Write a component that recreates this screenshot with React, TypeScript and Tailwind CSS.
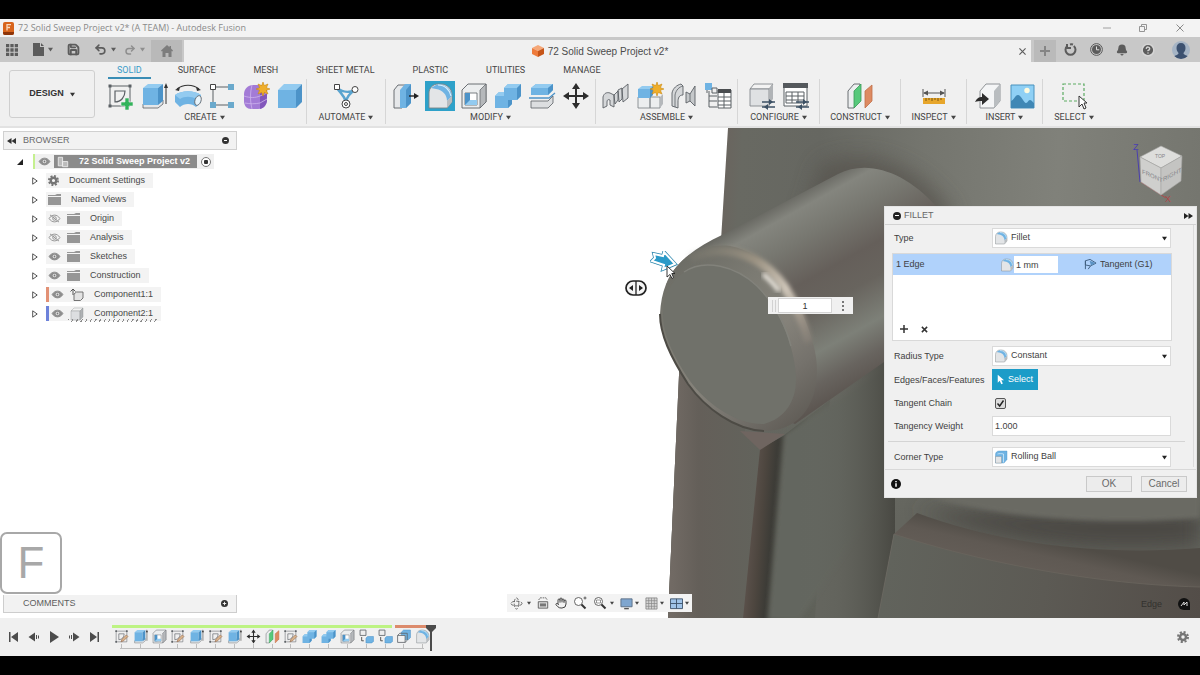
import { ReactNode, useState } from 'react'
import { Bell, CircleHelp, Hand, Save, Undo2, Redo2 } from 'lucide-react'
import clsx from 'clsx'

type IconProps = { className?: string }

const LINE = '#5b6065'
const BLUE = '#6fb3e3'
const BLUE_DARK = '#4c93c8'
const BLUE_LIGHT = '#93cbf0'

function Svg({ className = 'size-7', children }: IconProps & { children: ReactNode }) {
  return (
    <svg viewBox="0 0 28 28" className={clsx('shrink-0', className)} fill="none" aria-hidden="true">
      {children}
    </svg>
  )
}

function Caret({ className = 'size-[5px]' }: IconProps) {
  return (
    <svg viewBox="0 0 6 6" className={clsx('shrink-0', className)} fill="currentColor" aria-hidden="true">
      <path d="M0 1h6L3 5.5z" />
    </svg>
  )
}

function Gear({ className }: IconProps) {
  return (
    <svg viewBox="0 0 24 24" className={clsx('shrink-0', className)} fill="none" stroke="#757575" aria-hidden="true">
      <circle cx="12" cy="12" r="6" strokeWidth="5" />
      <circle cx="12" cy="12" r="10" strokeWidth="4" strokeDasharray="4.200 3.654" />
    </svg>
  )
}

/* ---------- tool icons ---------- */

function SketchIcon({ className, pencil }: IconProps & { pencil?: boolean }) {
  return (
    <Svg className={className}>
      <path d="M4 4h20v20H4z" stroke={LINE} strokeWidth="1" />
      <path d="M2.5 2.5h3v3h-3zM22.5 2.5h3v3h-3zM2.5 22.5h3v3h-3z" fill={LINE} />
      <path d="M9 20V9h10c0 6-4 11-10 11z" stroke={LINE} strokeWidth="1.2" />
      {pencil ? (
        <path d="M13 24l2-5 8-8 3 3-8 8z" fill="#d9b48c" stroke="#8a5a3c" />
      ) : (
        <path d="M19 16h4v4h4v4h-4v4h-4v-4h-4v-4h4z" fill="#32b35a" stroke="#f0f0f0" strokeWidth=".6" />
      )}
    </Svg>
  )
}

function ExtrudeIcon({ className }: IconProps) {
  return (
    <Svg className={className}>
      <path d="M3 22v4h15l5-4v-4z" fill="#e4e6e8" stroke={LINE} strokeWidth=".8" />
      <path d="M3 6l5-4h15l-5 4z" fill={BLUE_LIGHT} />
      <path d="M3 6h15v17H3z" fill={BLUE} />
      <path d="M18 6l5-4v17l-5 4z" fill={BLUE_DARK} />
      <path d="M26 22V5" stroke="#333" />
      <path d="M26 1l2 5h-4z" fill="#333" />
    </Svg>
  )
}

function RevolveIcon() {
  return (
    <Svg>
      <path d="M3 7c6-5 16-5 22 0" stroke="#333" strokeWidth="1.2" />
      <path d="M1 8l5-3-1 4zM27 8l-5-3 1 4z" fill="#333" />
      <path d="M1 13c7-5 19-5 26 0v7l-5 5c-4-4-12-4-16 0l-5-5z" fill={BLUE} />
      <path d="M1 13c7-5 19-5 26 0l-5 4c-4-3-12-3-16 0z" fill={BLUE_LIGHT} />
      <ellipse cx="24" cy="18.500" rx="3" ry="5" fill="#e8f4fb" stroke={LINE} strokeWidth=".8" transform="rotate(20 24 18.500)" />
    </Svg>
  )
}

function PatternIcon() {
  return (
    <Svg>
      <path d="M5 5h18M5 5v18h18" stroke={LINE} />
      <path d="M2.5 2.5h5v5h-5z" fill="#fff" stroke="#444" />
      <path d="M20 2h6v6h-6zM2 20h6v6H2zM20 20h6v6h-6z" fill="#6aa9cc" />
    </Svg>
  )
}

function Spark({ x, y }: { x: number; y: number }) {
  return (
    <g transform={`translate(${x} ${y})`}>
      <path
        d="M0-7l1.3 3.6L5-5 3.4-1.300 7 0 3.400 1.300 5 5 1.300 3.400 0 7-1.300 3.400-5 5-3.400 1.300-7 0-3.400-1.300-5-5-1.300-3.400z"
        fill="#efae2a"
        stroke="#c98a14"
        strokeWidth=".6"
      />
    </g>
  )
}

function FormIcon() {
  return (
    <Svg>
      <path d="M2 12c0-5 4-9 9-9h7c4 0 7 3 7 7v7c0 6-3 10-9 10H9c-4 0-7-3-7-8z" fill="#a37bd6" />
      <path d="M18 11l7-4v11c0 4-3 8-7 9z" fill="#8257bb" />
      <path d="M2 14c6 2 11 2 16 0l7-3M10 3c-2 8-2 16 0 24M3 21c5 1 10 1 15 0l7-4" stroke="#cdb4ee" strokeWidth=".8" />
      <Spark x={21} y={7} />
    </Svg>
  )
}

function CubeIcon({ className, blue = true }: IconProps & { blue?: boolean }) {
  return (
    <Svg className={className}>
      <path d="M2 8l6-6h18l-6 6z" fill={blue ? BLUE_LIGHT : '#f3f3f3'} stroke={blue ? 'none' : '#8b8e91'} strokeWidth=".8" />
      <path d="M2 8h18v18H2z" fill={blue ? BLUE : '#dcdee0'} stroke={blue ? 'none' : '#8b8e91'} strokeWidth=".8" />
      <path d="M20 8l6-6v18l-6 6z" fill={blue ? BLUE_DARK : '#aeb1b4'} stroke={blue ? 'none' : '#8b8e91'} strokeWidth=".8" />
    </Svg>
  )
}

function AutomateIcon() {
  return (
    <Svg>
      <path d="M5 6c4 6 7 7 9 14M23 8c-5 3-8 6-9 12M5 6c5 4 12 5 18 2" stroke="#5aa4cf" strokeWidth="2.500" />
      <path d="M2.500 2.500h5v5h-5z" fill="#fff" stroke="#444" />
      <circle cx="23" cy="7.500" r="3" fill="#fff" stroke="#444" />
      <circle cx="14" cy="22" r="4" fill="#fff" stroke="#444" />
      <circle cx="14" cy="22" r="1.500" stroke="#444" />
    </Svg>
  )
}

function PressPullIcon() {
  return (
    <Svg>
      <path d="M2 8l4-5h8v18l-4 5H2z" fill="#e6e8ea" stroke={LINE} strokeWidth=".9" />
      <path d="M8 8l5-6h6v19l-5 5H8z" fill={BLUE} />
      <path d="M14 8l5-6v19l-5 5z" fill={BLUE_DARK} />
      <path d="M17 14h6" stroke="#222" strokeWidth="1.400" />
      <path d="M27 14l-5-3v6z" fill="#222" />
    </Svg>
  )
}

function FilletIcon({ className }: IconProps) {
  return (
    <Svg className={className}>
      <path d="M3 11c0-5 4-9 9-9h3c6 0 11 5 11 11v7l-5 6H3z" fill="#e3e5e7" stroke="#7d8387" strokeWidth=".9" />
      <path d="M10 3c3-1 6-1 9 1 4 2 7 6 7 10l-5 5c0-6-4-11-11-12l-5-1z" fill={BLUE} />
      <path d="M12 3c7 0 12 5 13 11" stroke="#d8effc" strokeWidth="1.200" />
      <path d="M21 19l5-5v6l-5 6z" fill="#b9bdc0" />
    </Svg>
  )
}

function ShellIcon({ className }: IconProps) {
  return (
    <Svg className={className}>
      <path d="M2 8l6-6h18v18l-6 6H2z" fill="#eceeef" stroke={LINE} strokeWidth=".9" />
      <path d="M20 8l6-6v18l-6 6z" fill="#b5b8bb" stroke={LINE} strokeWidth=".7" />
      <path d="M5 11h12v12H5z" fill="#fff" stroke={LINE} strokeWidth=".8" />
      <path d="M5 11h5v12H5z" fill={BLUE_DARK} />
      <path d="M5 23l5-5h7v5z" fill={BLUE_LIGHT} />
    </Svg>
  )
}

function CombineIcon({ className }: IconProps) {
  return (
    <Svg className={className}>
      <path d="M10 6l4-4h13v12l-4 4h-5v4l-4 4H1V14l4-4h5z" fill={BLUE} />
      <path d="M10 6l4-4h13l-4 4zM1 14l4-4h5v4z" fill={BLUE_LIGHT} />
      <path d="M23 6l4-4v12l-4 4zM14 18h4v4l-4 4z" fill={BLUE_DARK} />
    </Svg>
  )
}

function SplitIcon() {
  return (
    <Svg>
      <path d="M3 6l5-4h17v6l-5 5H3z" fill={BLUE} />
      <path d="M3 6l5-4h17l-5 4z" fill={BLUE_LIGHT} />
      <path d="M20 6l5-4v6l-5 5z" fill={BLUE_DARK} />
      <path d="M3 19h17l5-5v7l-5 5H3z" fill="#dcdee0" stroke={LINE} strokeWidth=".8" />
      <path d="M1 16h20l6-5" stroke={BLUE_DARK} strokeWidth="1.300" />
    </Svg>
  )
}

function MoveIcon({ className }: IconProps) {
  return (
    <Svg className={className}>
      <path d="M14 4v20M4 14h20" stroke="#2d2d2d" strokeWidth="2" />
      <path d="M14 1l4 6h-8zM14 27l4-6h-8zM1 14l6-4v8zM27 14l-6-4v8z" fill="#2d2d2d" />
    </Svg>
  )
}

function InsertComponentIcon() {
  return (
    <Svg>
      <path
        d="M1 26V15c1-4 4-5 7-4l4 2v12l-4-2V18c-2-1-3 0-3 2v4zM12 13l4-4v9l-3 4zM16 8l4-2v11l-3 3zM20 7l6-5v14l-5 4z"
        fill="#d5d7d9"
        stroke={LINE}
        strokeWidth=".9"
      />
    </Svg>
  )
}

function NewComponentIcon() {
  return (
    <Svg>
      <path d="M2 15h12v11H2zM14 15h10v11H14z" fill="#eceeef" stroke="#85898c" strokeWidth=".9" />
      <path d="M24 15l3-3v10l-3 4z" fill="#b5b8bb" />
      <path d="M2 7l4-3h11l-3 3z" fill={BLUE_LIGHT} />
      <path d="M2 7h12v9H2z" fill={BLUE} />
      <path d="M14 7l3-3v9l-3 3z" fill={BLUE_DARK} />
      <Spark x={21} y={7} />
    </Svg>
  )
}

function JointIcon() {
  return (
    <Svg>
      <path d="M2 24V11c1-5 5-8 9-9l2 2v9c-4 0-5 3-5 7v6z" fill="#d5d7d9" stroke={LINE} strokeWidth=".9" />
      <path d="M5 25V13c1-5 4-8 8-9" stroke={LINE} strokeWidth=".8" />
      <path d="M16 10l4 2 5-8v20l-5-5-4 2z" fill="#c5c8ca" stroke={LINE} strokeWidth=".9" />
      <path d="M20 12v7" stroke={LINE} strokeWidth=".8" />
    </Svg>
  )
}

function BomIcon() {
  return (
    <Svg>
      <path d="M1 1h7v7H1z" fill={BLUE} />
      <path d="M8 6h5v5H8zM3 8v3" stroke={LINE} />
      <path d="M5 14h8M5 19h8M5 25h8M5 9v16" stroke={LINE} />
      <path d="M14 8h13v18H14z" fill="#fff" stroke={LINE} />
      <path d="M14 7h13v4H14z" fill="#4a4d50" />
      <path d="M14 15h13M14 19h13M14 23h13M20 11v15" stroke={LINE} />
    </Svg>
  )
}

function Sliders() {
  return (
    <>
      <path d="M14 20h13M14 25h13" stroke="#3c5064" strokeWidth="1.500" />
      <path d="M21 17l4 3-4 3zM20 22l-4 3 4 3z" fill="#3c5064" />
    </>
  )
}

function ConfigureIcon() {
  return (
    <Svg>
      <path d="M2 7l4-5h19l-4 5z" fill="#f3f3f3" stroke="#85898c" strokeWidth=".9" />
      <path d="M2 7h19v17H2z" fill="#dfe1e3" stroke="#85898c" strokeWidth=".9" />
      <path d="M21 7l4-5v15l-4 5z" fill="#b0b3b6" />
      <Sliders />
    </Svg>
  )
}

function ConfigTableIcon() {
  return (
    <Svg>
      <path d="M2 2h23v22H2z" fill="#fff" stroke={LINE} />
      <path d="M1 1h25v5H1z" fill="#55595d" />
      <path d="M4 10h18v11H4zM4 14h18M4 18h18M10 10v11M16 10v11" stroke={LINE} />
      <Sliders />
    </Svg>
  )
}

function PlaneIcon({ className }: IconProps) {
  return (
    <Svg className={className}>
      <path d="M2 9l6-7h6v16l-6 8H2z" fill="#eceeef" stroke={LINE} strokeWidth=".9" />
      <path d="M8 9l7-7v17l-7 7z" fill="#57c97b" stroke="#3b9b59" strokeWidth=".8" />
      <path d="M19 9l7-6v16l-7 7z" fill="#dd8a61" stroke="#c0704a" strokeWidth=".8" />
    </Svg>
  )
}

function MeasureIcon() {
  return (
    <Svg>
      <path d="M3 7v8M25 7v8M4 11h20" stroke="#555" />
      <path d="M3 11l5-2.500v5zM25 11l-5-2.500v5z" fill="#555" />
      <path d="M3 16h22v6H3z" fill="#e7a62b" />
      <path d="M6 16v3M9 16v2M12 16v3M15 16v2M18 16v3M21 16v2" stroke="#7b5611" />
    </Svg>
  )
}

function InsertIcon() {
  return (
    <Svg>
      <path d="M6 9l6-7h14v17l-6 7H6z" fill="#f4f5f6" stroke="#85898c" strokeWidth=".9" />
      <path d="M20 9l6-7v17l-6 7z" fill="#b9bdc0" />
      <path d="M1 20c2-4 4-5 7-5v-4l7 6-7 6v-4c-3 0-5 0-7 1z" fill="#2d2d2d" />
    </Svg>
  )
}

function DecalIcon() {
  return (
    <Svg>
      <path d="M3 3h23v23H3z" fill="#8fd0f5" stroke="#4b92bd" />
      <path d="M3 19c3-1 4-6 7-6s6 8 8 8 2-3 4-3 3 3 4 3v5H3z" fill="#3f87b5" />
      <circle cx="19" cy="8.500" r="2.700" fill="#fffbe0" />
    </Svg>
  )
}

function SelectIcon() {
  return (
    <Svg>
      <path d="M3 2h21v17H3z" stroke="#5cab62" strokeWidth="1.200" strokeDasharray="3 2" />
      <path d="M19 14v11l3-3 2 5 2-1-2-5h3z" fill="#fff" stroke="#333" />
    </Svg>
  )
}

function RigidIcon({ className }: IconProps) {
  return (
    <Svg className={className}>
      <path d="M2 2h11v10H2z" fill="#eee" stroke={LINE} strokeWidth="1.500" />
      <path d="M5 15v7h4" stroke="#333" strokeWidth="1.500" />
      <path d="M13 17l3-3h11v9l-3 3H13z" fill={BLUE} stroke={BLUE_DARK} />
    </Svg>
  )
}

function CopyBodyIcon({ className }: IconProps) {
  return (
    <Svg className={className}>
      <path d="M10 6l4-4h13v14l-4 4H10z" fill={BLUE} stroke={BLUE_DARK} />
      <path d="M3 12h14v13H3z" fill="#f3f3f3" stroke={LINE} strokeWidth="1.500" />
      <path d="M3 12l4-4h14v13l-4 4" stroke={LINE} strokeWidth="1.500" />
    </Svg>
  )
}

function RollingBallIcon({ className }: IconProps) {
  return (
    <Svg className={className}>
      <path d="M3 9c0-4 3-7 7-7h16v17l-6 7H3z" fill={BLUE} stroke={BLUE_DARK} strokeWidth=".8" />
      <path d="M3 13h12v13H3z" fill="#e3e5e7" stroke="#85898c" strokeWidth=".8" />
      <path d="M7 8c3-1 8-1 12 0v17" stroke="#d8effc" strokeWidth="1.500" />
    </Svg>
  )
}

/* ---------- top bars ---------- */

function TitleBar() {
  return (
    <header className="flex h-[18px] shrink-0 items-center bg-[#f3f3f3] pl-[3px] text-[#8a8a8a]">
      <svg viewBox="0 0 11 13" className="mr-1 h-[13px] w-[11px]" aria-hidden="true">
        <rect width="11" height="13" rx="2" fill="#d8641c" />
        <path d="M0 10h11v1a2 2 0 0 1-2 2H2a2 2 0 0 1-2-2z" fill="#8e3509" />
        <path d="M4 8.500V2.700h4M4 5.500h3" stroke="#fbd9bd" strokeWidth="1.300" fill="none" />
      </svg>
      <h1 className="font-['Open_Sans',sans-serif] text-[9px]">72 Solid Sweep Project v2* (A TEAM) - Autodesk Fusion</h1>
      <div className="ml-auto flex">
        <button aria-label="Minimize" className="flex h-[18px] w-9 items-center justify-center">
          <svg viewBox="0 0 8 8" className="size-2" stroke="currentColor" strokeWidth=".8">
            <path d="M0 4h8" />
          </svg>
        </button>
        <button aria-label="Restore" className="flex h-[18px] w-9 items-center justify-center">
          <svg viewBox="0 0 8 8" className="size-2" stroke="currentColor" fill="none" strokeWidth=".9">
            <path d="M.5 2.500h5v5h-5zM2.500 2V.5h5v5H6" />
          </svg>
        </button>
        <button aria-label="Close window" className="mr-px flex h-[18px] w-[38px] items-center justify-center">
          <svg viewBox="0 0 8 8" className="size-2" stroke="currentColor">
            <path d="M.5.5l7 7M7.500.5l-7 7" />
          </svg>
        </button>
      </div>
    </header>
  )
}

function QuickBar() {
  return (
    <div className="flex h-[25px] shrink-0 items-stretch bg-[#c8c8c8] text-[#5c5c5c]">
      <div className="flex w-[151px] items-center pl-1.5">
        <button aria-label="Data panel">
          <svg viewBox="0 0 11 11" className="size-[12px]" fill="currentColor">
            <path d="M0 0h3v3H0zM4 0h3v3H4zM8 0h3v3H8zM0 4h3v3H0zM4 4h3v3H4zM8 4h3v3H8zM0 8h3v3H0zM4 8h3v3H4zM8 8h3v3H8z" />
          </svg>
        </button>
        <button aria-label="File" className="ml-[15px] flex items-center gap-1">
          <svg viewBox="0 0 11 13" className="h-[13px] w-[11px]" fill="currentColor">
            <path d="M0 0h7v4h4v9H0z" />
            <path d="M8 0l3 3H8z" />
          </svg>
          <Caret />
        </button>
        <button aria-label="Save" className="ml-[14px]">
          <Save className="size-[13px]" strokeWidth={3.500} />
        </button>
        <button aria-label="Undo" className="ml-3.5 flex items-center gap-1">
          <Undo2 className="size-[13px]" strokeWidth={3} />
          <Caret />
        </button>
        <button aria-label="Redo" className="ml-2 flex items-center gap-1 text-[#8e8e8e]">
          <Redo2 className="size-[12px]" strokeWidth={3} />
          <Caret />
        </button>
      </div>
      <button aria-label="Home" className="mt-[3px] flex w-[31px] items-center justify-center bg-[#b9b9b9]">
        <svg viewBox="0 0 12 12" className="size-3" fill="#7d7d7d">
          <path d="M6 0l2.500 2.200V1H10v2.500l2 2L11.300 6.500 10.500 6v6H7.500V8h-3v4h-3V6l-.8.500L0 5.500z" />
        </svg>
      </button>
      <div className="mt-[3px] ml-0.5 flex flex-1 items-center bg-[#f0f0f0] pr-[3px]">
        <div className="flex flex-1 items-center justify-center gap-1 text-[10px] text-[#4c4c4c]">
          <svg viewBox="0 0 12 12" className="size-3" aria-hidden="true">
            <path d="M0 3l6-3 6 3-6 3z" fill="#f5a777" />
            <path d="M0 3l6 3v6L0 9z" fill="#ee7b3b" />
            <path d="M12 3L6 6v6l6-3z" fill="#c65518" />
          </svg>
          <span>72 Solid Sweep Project v2*</span>
        </div>
        <button aria-label="Close tab" className="flex size-3 items-center justify-center">
          <svg viewBox="0 0 8 8" className="size-[7px]" stroke="currentColor" strokeWidth="1.300">
            <path d="M.5.5l7 7M7.500.5l-7 7" />
          </svg>
        </button>
      </div>
      <button aria-label="New tab" className="mt-[3px] mr-2 ml-[3px] flex w-[22px] items-center justify-center bg-[#bababa]">
        <svg viewBox="0 0 10 10" className="size-2.5" fill="#858585">
          <path d="M4 0h2v4h4v2H6v4H4V6H0V4h4z" />
        </svg>
      </button>
      <div className="flex items-center gap-[13px] pr-2.5">
        <button aria-label="Extensions">
          <svg viewBox="0 0 13 13" className="size-[13px]" fill="none" stroke="currentColor" strokeWidth="2">
            <path d="M3.200 3A5 5 0 1 0 9.800 3" />
            <path d="M3 1v4h4" />
            <path d="M9 1.500A5 5 0 0 0 6 1.500" />
          </svg>
        </button>
        <button aria-label="Job status">
          <svg viewBox="0 0 13 13" className="size-[13px]">
            <circle cx="6.500" cy="6.500" r="5.900" fill="none" stroke="#5c5c5c" />
            <circle cx="6.500" cy="6.500" r="4.500" fill="#5c5c5c" />
            <path d="M6.500 3.500v3.300h2.700" stroke="#e0e0e0" fill="none" />
          </svg>
        </button>
        <button aria-label="Notifications">
          <Bell className="size-[12px]" fill="currentColor" strokeWidth={2.500} />
        </button>
        <button aria-label="Help">
          <CircleHelp className="size-[14px]" fill="#5c5c5c" stroke="#d5d5d5" strokeWidth={2.500} />
        </button>
        <button aria-label="Account" className="ml-1">
          <svg viewBox="0 0 18 18" className="size-[18px]">
            <circle cx="9" cy="9" r="9" fill="#a5b4c5" />
            <path d="M9 2c3 0 4.500 2 4.500 5S12 11 11.500 12c0 2 3 2 4 3.200A9 9 0 0 1 2.500 15.200c1-1.200 4-1.200 4-3.200C6 11 4.500 10 4.500 7S6 2 9 2z" fill="#3c5170" />
          </svg>
        </button>
      </div>
    </div>
  )
}

const WORKSPACE_TABS = ['SOLID', 'SURFACE', 'MESH', 'SHEET METAL', 'PLASTIC', 'UTILITIES', 'MANAGE']

const TOOL_GROUPS: { label: string; width: string; active?: number; icons: ReactNode[] }[] = [
  {
    label: 'CREATE',
    width: 'w-[204px]',
    icons: [<SketchIcon />, <ExtrudeIcon />, <RevolveIcon />, <PatternIcon />, <FormIcon />, <CubeIcon />]
  },
  { label: 'AUTOMATE', width: 'w-[79px]', icons: [<AutomateIcon />] },
  {
    label: 'MODIFY',
    width: 'w-[210px]',
    active: 1,
    icons: [<PressPullIcon />, <FilletIcon />, <ShellIcon />, <CombineIcon />, <SplitIcon />, <MoveIcon />]
  },
  {
    label: 'ASSEMBLE',
    width: 'w-[142px]',
    icons: [<InsertComponentIcon />, <NewComponentIcon />, <JointIcon />, <BomIcon />]
  },
  { label: 'CONFIGURE', width: 'w-[82px]', icons: [<ConfigureIcon />, <ConfigTableIcon />] },
  { label: 'CONSTRUCT', width: 'w-[81px]', icons: [<PlaneIcon />] },
  { label: 'INSPECT', width: 'w-[66px]', icons: [<MeasureIcon />] },
  { label: 'INSERT', width: 'w-[76px]', icons: [<InsertIcon />, <DecalIcon />] },
  { label: 'SELECT', width: 'w-[62px]', icons: [<SelectIcon />] }
]

function Ribbon() {
  const [tab, setTab] = useState('SOLID')
  return (
    <div className="flex h-[66px] shrink-0 border-b-2 border-[#e2e2e2] bg-[#f0f0f0] text-[#454545]">
      <button className="mt-2 mr-2 mb-2 ml-[9px] flex w-[86px] items-center justify-center gap-1.5 rounded-[3px] border border-[#cfcfcf] text-[9px] font-bold text-[#333]">
        DESIGN <Caret />
      </button>
      <div className="font-['Roboto',sans-serif]">
        <nav className="ml-[5px] flex h-[17px]">
          {WORKSPACE_TABS.map((name) => (
            <button
              key={name}
              onClick={() => setTab(name)}
              className={clsx(
                'border-b-2 pt-0.5 text-[9px] leading-[13px]',
                name === 'SOLID' ? 'mr-[27px] px-[9px]' : 'mr-[38px]',
                tab === name ? 'border-[#3a8db5] text-[#3a9cc9]' : 'border-transparent'
              )}
            >
              {name}
            </button>
          ))}
        </nav>
        <div className="flex">
          {TOOL_GROUPS.map((group) => (
            <div
              key={group.label}
              className={clsx('flex h-[45px] flex-col items-center border-r border-[#d6d6d6] last:border-r-0', group.width)}
            >
              <div className="flex">
                {group.icons.map((icon, i) => (
                  <button
                    key={i}
                    aria-label={`${group.label} tool ${i + 1}`}
                    className="flex h-[33px] w-[34px] items-center justify-center"
                  >
                    {i === group.active ? <span className="bg-[#2ea1c9] p-px">{icon}</span> : icon}
                  </button>
                ))}
              </div>
              <button className="flex items-center gap-[3px] text-[9px] leading-[11px] whitespace-nowrap">
                {group.label} <Caret />
              </button>
            </div>
          ))}
        </div>
      </div>
    </div>
  )
}

/* ---------- browser tree ---------- */

function Eye({ off }: { off?: boolean }) {
  return (
    <svg viewBox="0 0 14 10" className="h-[9px] w-[13px] shrink-0" fill="none" aria-hidden="true">
      <path d="M1 5c3-5 9-5 12 0-3 5-9 5-12 0z" fill={off ? 'none' : '#8d8d8d'} stroke="#8d8d8d" />
      <circle cx="7" cy="5" r="2" fill={off ? 'none' : '#e8e8e8'} stroke={off ? '#8d8d8d' : 'none'} />
      {!off && <circle cx="7" cy="5" r="1" fill="#777" />}
      {off && <path d="M2 1l10 8" stroke="#8d8d8d" />}
    </svg>
  )
}

function Folder() {
  return (
    <svg viewBox="0 0 13 11" className="h-[11px] w-[13px] shrink-0" fill="#969696" aria-hidden="true">
      <path d="M0 3h13v8H0zM0 1h7l2-1h4v2H0z" />
    </svg>
  )
}

type TreeItem = { name: string; eye?: 'on' | 'off'; icon: ReactNode; bar?: string; hatched?: boolean }

const TREE: TreeItem[] = [
  { name: 'Document Settings', icon: <Gear className="size-[11px]" /> },
  { name: 'Named Views', icon: <Folder /> },
  { name: 'Origin', eye: 'off', icon: <Folder /> },
  { name: 'Analysis', eye: 'off', icon: <Folder /> },
  { name: 'Sketches', eye: 'on', icon: <Folder /> },
  { name: 'Construction', eye: 'on', icon: <Folder /> },
  {
    name: 'Component1:1',
    eye: 'on',
    bar: 'bg-[#e29175]',
    icon: (
      <Svg className="size-[14px]">
        <path d="M8 12l5-4h13v12l-5 5H8z" fill="#e3e3e3" stroke="#666" strokeWidth="1.800" />
        <path d="M6 2v12M1 7l5-5 5 5" stroke="#555" strokeWidth="2" />
      </Svg>
    )
  },
  { name: 'Component2:1', eye: 'on', bar: 'bg-[#6d82da]', hatched: true, icon: <CubeIcon className="size-[14px]" blue={false} /> }
]

function BrowserPanel() {
  return (
    <section className="absolute top-[3px] left-[3px] w-[234px] text-[9px] text-[#484848]">
      <div className="flex h-[19px] items-center border border-[#d0d0d0] bg-[#f2f2f2] px-[3px]">
        <button aria-label="Collapse browser">
          <svg viewBox="0 0 9 6" className="h-[6px] w-[9px]" fill="#333">
            <path d="M4.500 0v6L0 3zM9 0v6L4.500 3z" />
          </svg>
        </button>
        <h2 className="ml-[7px] text-[#6b6b6b]">BROWSER</h2>
        <button aria-label="Browser options" className="mr-1 ml-auto flex size-[7px] items-center justify-center rounded-full bg-[#333]">
          <span className="h-px w-[3px] bg-white" />
        </button>
      </div>

      <ul className="mt-0.5">
        <li className="flex h-[19px] items-center">
          <button aria-label="Toggle project" className="ml-[14px] w-4">
            <svg viewBox="0 0 6 6" className="size-[6px]" fill="#222">
              <path d="M6 0v6H0z" />
            </svg>
          </button>
          <div className="flex h-[15px] items-center bg-[#f0f0f0] pr-[3px]">
            <span className="h-[15px] w-[2px] bg-[#c5f08f]" />
            <span className="mx-[3px]">
              <Eye />
            </span>
            <span className="flex h-[13px] items-center gap-2.5 bg-[#8b8b8b] pr-[7px] pl-[3px] font-bold text-white">
              <Svg className="size-3">
                <path d="M3 3h10v20H3zM13 13h12v12H13z" fill="#bbb" stroke="#eee" strokeWidth="2" />
              </Svg>
              72 Solid Sweep Project v2
            </span>
            <input
              type="radio"
              aria-label="Activate project"
              defaultChecked
              className="ml-1 size-[10px] appearance-none rounded-full border border-[#777] bg-white bg-[radial-gradient(#333_35%,transparent_45%)]"
            />
          </div>
        </li>
        {TREE.map((item) => (
          <li key={item.name} className="flex h-[19px] items-center pl-[29px]">
            <button aria-label={`Expand ${item.name}`} className="w-[14px] shrink-0">
              <svg viewBox="0 0 6 8" className="h-2 w-[6px]" fill="#fff" stroke="#555">
                <path d="M.7.8l4.500 3.200L.7 7.200z" />
              </svg>
            </button>
            <div className={clsx('relative flex h-[15px] items-center gap-2.5 bg-[#f3f3f3] pr-2', !item.bar && 'pl-0.5')}>
              {item.eye && (
                <span className="-mr-1 flex items-center">
                  {item.bar && <span className={clsx('mr-[2px] h-[15px] w-[3px]', item.bar)} />}
                  <Eye off={item.eye === 'off'} />
                </span>
              )}
              {item.icon}
              {item.name}
              {item.hatched && (
                <span className="absolute right-1 -bottom-px left-[22px] h-[3px] bg-[repeating-linear-gradient(120deg,#8a8a8a_0px,#8a8a8a_1px,transparent_1px,transparent_4px)]" />
              )}
            </div>
          </li>
        ))}
      </ul>
    </section>
  )
}

function CommentsPanel() {
  return (
    <section className="absolute bottom-[5px] left-[3px] flex h-[18px] w-[234px] items-center border border-t-0 border-[#cdcdcd] bg-[#f2f2f2] pr-2 pl-[19px] text-[9px] text-[#5d5d5d]">
      <h2>COMMENTS</h2>
      <button aria-label="Add comment" className="ml-auto">
        <svg viewBox="0 0 8 8" className="size-[7px]">
          <circle cx="4" cy="4" r="4" fill="#333" />
          <path d="M4 2v4M2 4h4" stroke="#fff" />
        </svg>
      </button>
    </section>
  )
}

/* ---------- 3D view ---------- */

function ModelView() {
  return (
    <svg
      viewBox="0 128 1200 490"
      preserveAspectRatio="xMaxYMin slice"
      className="absolute inset-0 size-full"
      role="img"
      aria-label="Solid model with a filleted cylinder"
    >
      <defs>
        <linearGradient id="wall" gradientUnits="userSpaceOnUse" x1="722" y1="160" x2="1200" y2="190">
          <stop offset="0" stopColor="#6a645e" />
          <stop offset=".04" stopColor="#686962" />
          <stop offset=".2" stopColor="#666761" />
          <stop offset=".42" stopColor="#74756e" />
          <stop offset=".7" stopColor="#80817a" />
          <stop offset="1" stopColor="#75766f" />
        </linearGradient>
        <linearGradient id="wallFade" gradientUnits="userSpaceOnUse" x1="0" y1="300" x2="0" y2="520">
          <stop offset="0" stopColor="#64655e" stopOpacity="0" />
          <stop offset="1" stopColor="#64655e" />
        </linearGradient>
        <linearGradient id="barrel" gradientUnits="userSpaceOnUse" x1="782" y1="202" x2="885" y2="388">
          <stop offset="0" stopColor="#696963" />
          <stop offset=".07" stopColor="#84857e" />
          <stop offset=".2" stopColor="#777770" />
          <stop offset=".38" stopColor="#655f5a" />
          <stop offset=".52" stopColor="#68645e" />
          <stop offset=".7" stopColor="#7d8078" />
          <stop offset=".83" stopColor="#68645f" />
          <stop offset="1" stopColor="#544c47" />
        </linearGradient>
        <linearGradient id="rim" gradientUnits="userSpaceOnUse" x1="670" y1="260" x2="805" y2="430">
          <stop offset="0" stopColor="#6b6b64" />
          <stop offset=".3" stopColor="#7c7b73" />
          <stop offset=".55" stopColor="#85827a" />
          <stop offset=".75" stopColor="#75726c" />
          <stop offset="1" stopColor="#5c5852" />
        </linearGradient>
        <linearGradient id="shine" gradientUnits="userSpaceOnUse" x1="692" y1="255" x2="812" y2="350">
          <stop offset="0" stopColor="#8a8578" stopOpacity=".2" />
          <stop offset=".35" stopColor="#9c9383" />
          <stop offset=".62" stopColor="#cfc6b9" />
          <stop offset=".8" stopColor="#9f968a" />
          <stop offset="1" stopColor="#8a8178" stopOpacity=".2" />
        </linearGradient>
        <linearGradient id="lowerLeft" gradientUnits="userSpaceOnUse" x1="672" y1="0" x2="760" y2="0">
          <stop offset="0" stopColor="#716a64" />
          <stop offset=".3" stopColor="#645f59" />
          <stop offset="1" stopColor="#62635c" />
        </linearGradient>
        <linearGradient id="groove" gradientUnits="userSpaceOnUse" x1="750" y1="520" x2="800" y2="524">
          <stop offset="0" stopColor="#5b514b" />
          <stop offset=".22" stopColor="#4d463f" />
          <stop offset=".42" stopColor="#3d3c37" />
          <stop offset="1" stopColor="#5e6058" />
        </linearGradient>
        <linearGradient id="slot" gradientUnits="userSpaceOnUse" x1="800" y1="0" x2="895" y2="0">
          <stop offset="0" stopColor="#686a63" stopOpacity="0" />
          <stop offset=".4" stopColor="#60615a" stopOpacity=".4" />
          <stop offset="1" stopColor="#484842" />
        </linearGradient>
        <linearGradient id="ledge" gradientUnits="userSpaceOnUse" x1="1000" y1="530" x2="990" y2="575">
          <stop offset="0" stopColor="#504c46" />
          <stop offset=".35" stopColor="#5f5953" />
          <stop offset="1" stopColor="#665f59" />
        </linearGradient>
        <linearGradient id="front" gradientUnits="userSpaceOnUse" x1="890" y1="560" x2="1200" y2="610">
          <stop offset="0" stopColor="#61635c" />
          <stop offset=".5" stopColor="#5c5a54" />
          <stop offset="1" stopColor="#534d48" />
        </linearGradient>
        <filter id="soft2">
          <feGaussianBlur stdDeviation="2" />
        </filter>
        <filter id="soft10" x="-50%" y="-50%" width="200%" height="200%">
          <feGaussianBlur stdDeviation="10" />
        </filter>
        <clipPath id="body">
          <path d="M728 128L721 240L684 300L679 375L668 618H1200V128z" />
        </clipPath>
      </defs>

      <g clipPath="url(#body)">
        <path d="M660 128H1200V618H660z" fill="url(#wall)" />
        <path d="M660 300H1200V618H660z" fill="url(#wallFade)" />
        <path d="M820 165C860 145 920 160 955 215L900 240L800 230z" fill="#54514c" opacity=".7" filter="url(#soft10)" />

        <path d="M660 340H745V433L760 449L743 618H660z" fill="url(#lowerLeft)" />
        <path d="M760 449L783 436L830 400L815 618H743z" fill="url(#groove)" />
        <path d="M784 434L900 360V470L800 620H768z" fill="#64665f" filter="url(#soft2)" />
        <path d="M740 431L760 450L785 434z" fill="#6f6560" />

        <path d="M800 300H895V534L879 618H800z" fill="url(#slot)" />
        <path d="M917 510C1000 545 1100 556 1200 546V510H940z" fill="#4b4a44" filter="url(#soft10)" />
        <path d="M920 490H1200V518C1100 526 1010 518 940 500z" fill="#6a6a63" filter="url(#soft2)" />
        <path d="M894 534L917 513C1000 544 1100 556 1200 548V620H878z" fill="url(#ledge)" />
        <path d="M894 534C960 556 1080 584 1200 587V620H878z" fill="url(#front)" />
        <path d="M894 534C960 556 1080 584 1200 587" stroke="#6a645d" strokeWidth=".8" fill="none" />
        <path d="M894 534L878 618" stroke="#6f6c65" strokeWidth=".8" />
      </g>

      <path
        d="M666 285C674 262 698 246 722 235L838 174C868 159 905 172 936 206L960 260L930 330L795 424L740 400z"
        fill="url(#barrel)"
      />
      <path
        d="M681 262C694 248 714 244 730 246C765 252 792 288 805 320C815 345 819 362 816 384C812 410 796 431 764 431C735 430 705 408 688 384C670 356 660 334 660 314C661 292 668 274 681 262z"
        fill="url(#rim)"
      />
      <path d="M690 258C728 240 764 258 784 286C796 304 804 322 809 342" stroke="url(#shine)" strokeWidth="9" fill="none" filter="url(#soft2)" />
      <path d="M763 274C770 280 775 285 779 291" stroke="#f4efe6" strokeWidth="4" fill="none" filter="url(#soft2)" />
      <path
        d="M684 272C704 258 736 266 757 286C780 310 794 345 796 376C797 400 786 418 764 424C736 425 706 403 690 381C672 354 663 334 663 314C664 294 671 281 684 272z"
        fill="#70716a"
      />
      <path d="M684 272C704 258 736 266 757 286C772 301 785 322 791 346" stroke="#82827b" strokeWidth="1.500" fill="none" />
      <path d="M660 314C660 334 670 356 688 384C705 408 735 430 764 431" stroke="#4d4b45" strokeWidth="2" fill="none" />
    </svg>
  )
}

function ViewCube() {
  return (
    <svg viewBox="0 0 60 66" className="absolute top-3 right-2 h-[66px] w-[60px]" aria-label="View cube" role="img">
      <path d="M5 10l3 32" stroke="#4a3fb0" />
      <path d="M9 42l25 16" stroke="#b0484a" />
      <path d="M8 17l21-11 21 10-21 12z" fill="#dededc" stroke="#a5a5a2" strokeWidth=".6" />
      <path d="M8 17l21 11v27L9 42z" fill="#cfcfcd" stroke="#a5a5a2" strokeWidth=".6" />
      <path d="M50 16L29 28v27l20-14z" fill="#c4c4c2" stroke="#a5a5a2" strokeWidth=".6" />
      <text x="1" y="10" fontSize="9" fill="#4a3fb0">Z</text>
      <text x="33" y="62" fontSize="9" fill="#b0484a">X</text>
      <text x="10" y="30" fontSize="6" fill="#85858a" transform="skewY(24) translate(0 -1)">FRONT</text>
      <text x="31" y="56" fontSize="6" fill="#85858a" transform="skewY(-28) translate(0 2)">RIGHT</text>
      <text x="23" y="18" fontSize="5" fill="#85858a">TOP</text>
    </svg>
  )
}

function CanvasHandles() {
  return (
    <>
      <svg viewBox="0 0 28 30" className="absolute top-[123px] left-[650px] h-[30px] w-7" aria-hidden="true">
        <path d="M4 3l9 2 1-4 11 12-12 5 1-4L2 10l3-3z" fill="#2b9ac8" stroke="#2b86ad" strokeWidth="3.500" />
        <path d="M4 3l9 2 1-4 11 12-12 5 1-4L2 10l3-3z" fill="#2b9ac8" stroke="#fff" strokeWidth="2" />
        <path d="M17 15v11l3-2.500 2 4 1.500-1-1.700-4H25z" fill="#fff" stroke="#222" strokeWidth=".9" />
      </svg>
      <svg viewBox="0 0 22 16" className="absolute top-[152px] left-[625px] h-4 w-[22px]" aria-hidden="true">
        <rect x="1" y="1" width="20" height="14" rx="7" fill="#f5f5f5" stroke="#222" strokeWidth="1.700" />
        <path d="M11 1v14" stroke="#222" strokeWidth="1.300" />
        <path d="M4 8l4-3v6zM18 8l-4-3v6z" fill="#222" />
      </svg>
      <div className="absolute top-[169px] left-[768px] flex h-[17px] w-[85px] items-center bg-[#f0f0f0]">
        <span className="mr-px ml-1 h-3 w-1 border-x border-[#d2d2d2]" />
        <input
          aria-label="Radius"
          defaultValue="1"
          className="ml-px h-[15px] w-[54px] border border-[#d5d5d5] bg-white text-center text-[9px] text-[#333]"
        />
        <button aria-label="More options" className="flex flex-1 flex-col items-center gap-[2px]">
          <span className="size-[2px] bg-[#777]" />
          <span className="size-[2px] bg-[#777]" />
          <span className="size-[2px] bg-[#777]" />
        </button>
      </div>
    </>
  )
}

/* ---------- fillet dialog ---------- */

function SelectBox({ id, icon, options }: { id: string; icon: ReactNode; options: string[] }) {
  return (
    <div className="flex h-5 w-[179px] items-center border border-[#dadada] bg-white pr-[3px] pl-px">
      {icon}
      <select id={id} className="ml-[3px] flex-1 appearance-none bg-transparent outline-none">
        {options.map((o) => (
          <option key={o}>{o}</option>
        ))}
      </select>
      <Caret className="pointer-events-none size-[5px] text-[#222]" />
    </div>
  )
}

function Field({ id, label, children }: { id: string; label: string; children: ReactNode }) {
  return (
    <div className="flex items-center">
      <label htmlFor={id} className="w-[98px] shrink-0 leading-[14px]">
        {label}
      </label>
      {children}
    </div>
  )
}

function FilletDialog() {
  return (
    <section
      role="dialog"
      aria-labelledby="fillet-title"
      className="absolute top-[78px] right-[3px] w-[313px] border border-[#e4e4e4] bg-[#f0f0f0] text-[9px] text-[#3f3f3f]"
    >
      <div className="flex h-[18px] items-center border-b border-[#d2d2d2] pr-[3px] pl-2">
        <span className="flex size-[8px] items-center justify-center rounded-full bg-[#222]">
          <span className="h-px w-1 bg-white" />
        </span>
        <h2 id="fillet-title" className="ml-[3px] text-[#666]">
          FILLET
        </h2>
        <button aria-label="Expand dialog" className="ml-auto">
          <svg viewBox="0 0 9 6" className="h-[6px] w-[9px]" fill="#222">
            <path d="M0 0v6l4.500-3zM4.500 0v6L9 3z" />
          </svg>
        </button>
      </div>

      <div className="mr-0.5 border-r border-[#dcdcdc] pt-[3px] pl-[9px]">
        <Field id="type" label="Type">
          <SelectBox id="type" icon={<FilletIcon className="size-[14px]" />} options={['Fillet', 'Full Round Fillet', 'Rule Fillet']} />
        </Field>

        <div className="mt-[5px] -ml-[2px] flex h-[88px] w-[280px] flex-col border border-[#d9d9d9] bg-white">
          <div className="flex h-[21px] shrink-0 items-center bg-[#b0d2fb]">
            <span className="w-[107px] pl-[3px]">1 Edge</span>
            <FilletIcon className="size-[14px]" />
            <input aria-label="Edge radius" defaultValue="1 mm" className="h-[17px] w-11 bg-white pl-0.5" />
            <Svg className="ml-[26px] size-[13px]">
              <path d="M3 6l10-3 13 8-12 6-11-2zM3 6v18M14 17l-5 7" stroke="#3d5c7c" strokeWidth="2" />
              <path d="M12 6l13 5-10 5z" fill="#5b93c4" />
            </Svg>
            <select aria-label="Continuity" className="ml-[3px] appearance-none bg-transparent">
              <option>Tangent (G1)</option>
              <option>Curvature (G2)</option>
            </select>
          </div>
          <div className="mt-auto flex gap-[13px] px-[7px] pb-[7px]">
            <button aria-label="Add selection set">
              <svg viewBox="0 0 8 8" className="size-2" stroke="#333" strokeWidth="1.500">
                <path d="M4 0v8M0 4h8" />
              </svg>
            </button>
            <button aria-label="Remove selection set">
              <svg viewBox="0 0 8 8" className="size-[7px]" stroke="#333" strokeWidth="1.700">
                <path d="M1 1l6 6M7 1l-6 6" />
              </svg>
            </button>
          </div>
        </div>

        <div className="mt-[5px] flex flex-col">
          <Field id="radius-type" label="Radius Type">
            <SelectBox id="radius-type" icon={<FilletIcon className="size-[14px]" />} options={['Constant', 'Chord Length', 'Variable']} />
          </Field>
          <div className="mt-[3px]">
            <Field id="edges" label="Edges/Faces/Features">
              <button id="edges" className="flex h-[21px] w-[46px] items-center gap-0.5 bg-[#1c9cc8] pl-[3px] text-white">
                <Svg className="size-[11px]">
                  <path d="M7 2v20l5-5 4 9 4-2-4-8h7z" fill="#fff" />
                </Svg>
                Select
              </button>
            </Field>
          </div>
          <div className="mt-[6px]">
            <Field id="tangent-chain" label="Tangent Chain">
              <span className="relative ml-[3px] size-[11px]">
                <input
                  id="tangent-chain"
                  type="checkbox"
                  defaultChecked
                  className="peer block size-[11px] appearance-none rounded-[2px] border border-[#555] bg-[#dcdcdc]"
                />
                <svg viewBox="0 0 11 11" className="pointer-events-none absolute inset-0 hidden size-[11px] peer-checked:block" fill="none">
                  <path d="M2.500 5.500l2.200 2.500L8.500 2.500" stroke="#222" strokeWidth="1.400" />
                </svg>
              </span>
            </Field>
          </div>
          <div className="mt-[6px]">
            <Field id="weight" label="Tangency Weight">
              <input id="weight" defaultValue="1.000" className="h-5 w-[179px] border border-[#dadada] bg-white pl-0.5" />
            </Field>
          </div>
          <div className="mt-[5px] mr-2 -ml-1.5 border-t border-[#d4d4d4] pt-[5px] pl-1.5">
            <Field id="corner-type" label="Corner Type">
              <SelectBox id="corner-type" icon={<RollingBallIcon className="size-[14px]" />} options={['Rolling Ball', 'Setback']} />
            </Field>
          </div>
        </div>
      </div>

      <div className="mt-0.5 flex h-7 items-center gap-[9px] border-t border-[#d8d8d8] pr-[9px] pl-1.5 text-[10px] text-[#6a6a6a]">
        <svg viewBox="0 0 10 10" className="mr-auto size-2.5" role="img" aria-label="Info">
          <circle cx="5" cy="5" r="5" fill="#111" />
          <path d="M5 4.300v3.500M5 2v1.300" stroke="#fff" strokeWidth="1.500" />
        </svg>
        <button className="h-4 w-[46px] border border-[#c9c9c9] bg-[#ececec] leading-[14px]">OK</button>
        <button className="h-4 w-[46px] border border-[#c9c9c9] bg-[#ececec] leading-[14px]">Cancel</button>
      </div>
    </section>
  )
}

/* ---------- navigation + timeline ---------- */

function NavBar() {
  return (
    <div className="absolute bottom-[6px] left-[507px] flex h-[18px] w-[185px] items-center justify-between bg-[#f3f3f3] px-[3px] text-[#444]">
      <button aria-label="Orbit" className="flex items-center gap-1">
        <Svg className="size-[13px]">
          <ellipse cx="14" cy="14" rx="12" ry="5" stroke="#555" strokeWidth="1.800" strokeDasharray="7 3" />
          <ellipse cx="14" cy="14" rx="5" ry="12" stroke="#555" strokeWidth="1.800" strokeDasharray="7 3" />
        </Svg>
        <Caret className="size-1" />
      </button>
      <button aria-label="Look at">
        <Svg className="size-3">
          <path d="M3 11h22v15H3z" stroke="#555" strokeWidth="2" fill="#ddd" />
          <path d="M7 15h14v7H7z" fill="#777" />
          <path d="M4 7l3-5h14l3 5" stroke="#555" strokeWidth="2" strokeDasharray="4 2" />
        </Svg>
      </button>
      <button aria-label="Pan">
        <Hand className="size-3" strokeWidth={2} />
      </button>
      <button aria-label="Zoom">
        <Svg className="size-3.5">
          <circle cx="11" cy="11" r="8" stroke="#555" strokeWidth="1.800" fill="#fff" />
          <path d="M17 17l8 8" stroke="#333" strokeWidth="4" />
          <path d="M21 4h6M24 1v6" stroke="#333" strokeWidth="1.500" />
        </Svg>
      </button>
      <button aria-label="Zoom window" className="flex items-center gap-[3px]">
        <Svg className="size-3.5">
          <circle cx="11" cy="11" r="8" stroke="#555" strokeWidth="1.800" fill="#fff" />
          <path d="M7 8h8v6H7z" stroke="#777" strokeWidth="1.500" />
          <path d="M17 17l8 8" stroke="#333" strokeWidth="4" />
        </Svg>
        <Caret className="size-1" />
      </button>
      <button aria-label="Display settings" className="flex items-center gap-0.5">
        <Svg className="size-[13px]">
          <path d="M2 4h24v17H2z" fill="#7fa6cf" stroke="#5c6f86" strokeWidth="2" />
          <path d="M9 25h10" stroke="#555" strokeWidth="3" />
        </Svg>
        <Caret className="size-1" />
      </button>
      <button aria-label="Grid and snaps" className="flex items-center gap-0.5">
        <Svg className="size-[13px]">
          <path d="M2 2h24v24H2z" fill="#d5d5d5" stroke="#777" strokeWidth="1.500" />
          <path d="M2 8h24M2 14h24M2 20h24M8 2v24M14 2v24M20 2v24" stroke="#888" strokeWidth="1.500" />
        </Svg>
        <Caret className="size-1" />
      </button>
      <button aria-label="Viewports" className="flex items-center gap-0.5">
        <Svg className="size-[13px]">
          <path d="M1 4h26v21H1z" fill="#9fc3e8" stroke="#3f536b" strokeWidth="2" />
          <path d="M14 4v21M1 14h26" stroke="#3f536b" strokeWidth="2" />
        </Svg>
        <Caret className="size-1" />
      </button>
    </div>
  )
}

const PLAYBACK = [
  { label: 'Go to start', d: 'M1 1h1.500v10H1zM10 1v10L3 6z' },
  { label: 'Step back', d: 'M7 1.500v9L.5 6zM8 4h1v4H8zM10 4.500h1v3h-1z' },
  { label: 'Play', d: 'M2 0l9 6-9 6z' },
  { label: 'Step forward', d: 'M5 1.500v9L11.500 6zM3 4h1v4H3zM1 4.500h1v3H1z' },
  { label: 'Go to end', d: 'M9.500 1H11v10H9.500zM2 1v10l7-5z' }
]

const S = 'size-[15px]'
const TIMELINE: ReactNode[] = [
  <SketchIcon className={S} pencil />,
  <ExtrudeIcon className={S} />,
  <ShellIcon className={S} />,
  <SketchIcon className={S} pencil />,
  <ExtrudeIcon className={S} />,
  <SketchIcon className={S} pencil />,
  <ExtrudeIcon className={S} />,
  <MoveIcon className={S} />,
  <PlaneIcon className={S} />,
  <SketchIcon className={S} pencil />,
  <CombineIcon className={S} />,
  <CombineIcon className={S} />,
  <ShellIcon className={S} />,
  <RigidIcon className={S} />,
  <RigidIcon className={S} />,
  <CopyBodyIcon className={S} />,
  <FilletIcon className={S} />
]

function Timeline() {
  return (
    <footer className="flex h-[38px] shrink-0 items-center bg-[#f0f0f0] pr-[11px] pl-2">
      <div className="flex gap-2">
        {PLAYBACK.map((p) => (
          <button key={p.label} aria-label={p.label}>
            <svg viewBox="0 0 12 12" className="size-3" fill="#4c4c4c">
              <path d={p.d} />
            </svg>
          </button>
        ))}
      </div>
      <div className="relative ml-3 w-80 self-stretch pt-[7px]">
        <div className="flex h-[3px] gap-[3px]">
          <span className="w-[280px] bg-[#bdf383]" />
          <span className="flex-1 bg-[#dc8b6c]" />
        </div>
        <ul className="flex pt-px">
          {TIMELINE.map((icon, i) => (
            <li key={i} className="flex flex-1 flex-col items-center">
              <button aria-label={`Feature ${i + 1}`}>{icon}</button>
              <span className="h-1 w-px bg-[#bdbdbd]" />
            </li>
          ))}
        </ul>
        <div className="mx-2 border-t border-[#bdbdbd]" />
        <svg viewBox="0 0 10 26" className="absolute top-[7px] -right-1 h-[26px] w-2.5" fill="#4b4b4b" aria-hidden="true">
          <path d="M0 0h10v3L6 7v19H4V7L0 3z" />
        </svg>
      </div>
      <button aria-label="Timeline settings" className="ml-auto">
        <Gear className="size-3" />
      </button>
    </footer>
  )
}

export default function App() {
  return (
    <div className="flex h-screen flex-col overflow-hidden bg-black py-[19px] font-['Liberation_Sans',Arial,sans-serif]">
      <TitleBar />
      <QuickBar />
      <Ribbon />
      <main className="relative min-h-0 flex-1 overflow-hidden bg-white">
        <ModelView />
        <BrowserPanel />
        <CommentsPanel />
        <kbd className="absolute bottom-6 left-0 flex h-[62px] w-[62px] items-center justify-center rounded-[7px] border-2 border-[#a8a8a8] bg-white font-['Liberation_Sans',sans-serif] text-[44px] leading-none text-[#a8a8a8]">
          F
        </kbd>
        <CanvasHandles />
        <ViewCube />
        <FilletDialog />
        <NavBar />
        <div className="absolute right-[10px] bottom-[7px] flex items-center gap-4 text-[9px] text-[#33312e]">
          Edge
          <svg viewBox="0 0 12 12" className="size-3" role="img" aria-label="Assistant">
            <path d="M6 0a6 6 0 0 1 6 6v6H6A6 6 0 0 1 6 0z" fill="#111" />
            <path d="M3 8l3-4v3l3-3v4" stroke="#ddd" fill="none" />
          </svg>
        </div>
      </main>
      <Timeline />
    </div>
  )
}
